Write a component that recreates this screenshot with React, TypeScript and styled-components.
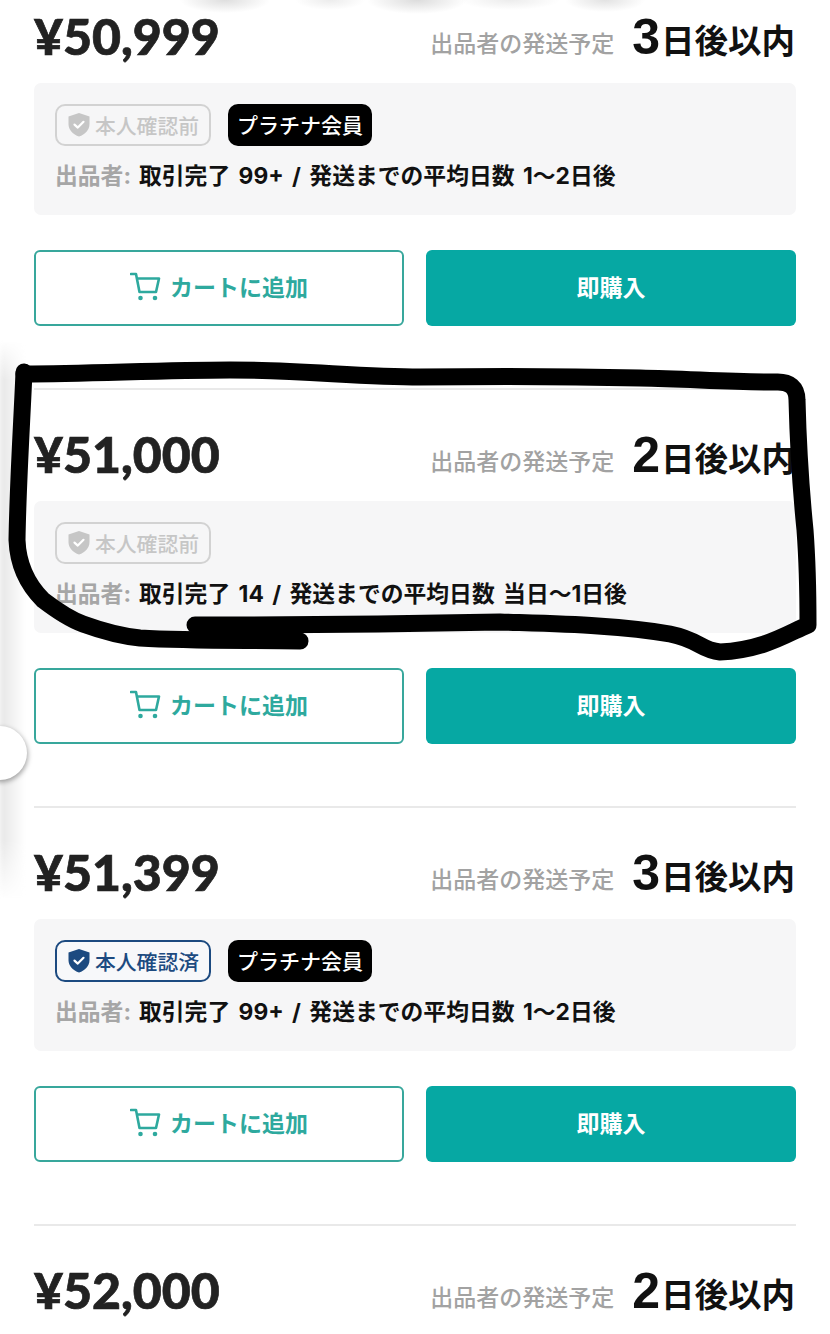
import React from "react";
import styled, { createGlobalStyle } from "styled-components";

const Global = createGlobalStyle`
  html, body { margin: 0; padding: 0; background: #fff; }
  * { box-sizing: border-box; }
`;

const Page = styled.div`
  position: relative;
  width: 830px;
  height: 1334px;
  overflow: hidden;
  background: #fff;
  padding: 14px 34px 0;
  font-family: "Noto Sans CJK JP", sans-serif;
`;

const Listing = styled.section<{ $first?: boolean }>`
  padding-top: ${(p) => (p.$first ? "0" : "42px")};
  padding-bottom: 62px;
  border-top: ${(p) => (p.$first ? "none" : "2px solid #e9e9e9")};
`;

const PriceRow = styled.div`
  display: flex;
  justify-content: space-between;
  align-items: center;
  height: 46px;
  margin-bottom: 23px;
`;

const Price = styled.div`
  font-family: Lato, "Noto Sans", sans-serif;
  font-weight: 900;
  font-size: 50px;
  line-height: 46px;
  color: #222;
  padding-bottom: 3px;
  -webkit-text-stroke: 0.7px #222;
`;

const Shipping = styled.div`
  display: flex;
  align-items: center;
  margin-right: 1px;
`;

const ShippingLabel = styled.span`
  font-size: 23px;
  font-weight: 500;
  line-height: 46px;
  color: #a2a2a2;
  margin-right: 18px;
  padding-top: 10px;
`;

const Days = styled.span`
  font-family: "Liberation Sans", sans-serif;
  font-weight: 700;
  font-size: 50px;
  line-height: 46px;
  margin-right: 1px;
  color: #111;
`;

const DaysUnit = styled.span`
  font-size: 33.5px;
  font-weight: 700;
  line-height: 46px;
  color: #111;
  padding-top: 4px;
`;

const SellerPanel = styled.div`
  height: 132px;
  background: #f6f6f7;
  border-radius: 7px;
  padding: 21px 21px 0;
  margin-bottom: 35px;
`;

const BadgeRow = styled.div`
  display: flex;
  gap: 17px;
  height: 42px;
  margin-bottom: 7px;
`;

const VerifyBadge = styled.div<{ $verified?: boolean }>`
  display: flex;
  align-items: center;
  gap: 4px;
  width: 156px;
  height: 42px;
  padding: 0 0 1px 10px;
  border: 2px solid ${(p) => (p.$verified ? "#1c4a80" : "#d2d2d2")};
  border-radius: 10px;
  background: ${(p) => (p.$verified ? "#f7f8fa" : "transparent")};
  color: ${(p) => (p.$verified ? "#1c4a80" : "#c6c6c6")};
  font-size: 20.8px;
  font-weight: 500;
  white-space: nowrap;
`;

const MemberBadge = styled.div`
  display: flex;
  align-items: center;
  justify-content: center;
  width: 144px;
  height: 42px;
  padding-bottom: 2px;
  border-radius: 10px;
  background: #000;
  color: #fff;
  font-size: 21px;
  font-weight: 500;
`;

const SellerLine = styled.div`
  font-family: Inter, "Noto Sans CJK JP", sans-serif;
  font-size: 22.8px;
  font-weight: 700;
  line-height: 46px;
  word-spacing: 3px;
  color: #111;
  white-space: nowrap;
`;

const SellerLabel = styled.span`
  color: #a6a6a6;
  margin-right: 8px;
`;

const Actions = styled.div`
  display: grid;
  grid-template-columns: 370px 370px;
  gap: 22px;
`;

const CartButton = styled.button`
  display: flex;
  align-items: center;
  justify-content: center;
  gap: 9px;
  height: 76px;
  background: #fff;
  border: 2px solid #38a79c;
  border-radius: 6px;
  color: #2ea99e;
  font-family: inherit;
  font-size: 23px;
  font-weight: 700;
  padding: 0 0 4px;
`;

const BuyButton = styled.button`
  height: 76px;
  background: #06a8a3;
  border: none;
  border-radius: 6px;
  color: #fff;
  font-family: inherit;
  font-size: 23px;
  font-weight: 700;
  padding: 0 0 4px;
`;

const EdgeShadow = styled.div`
  position: absolute;
  left: 0;
  top: 340px;
  width: 26px;
  height: 560px;
  background: linear-gradient(90deg, #e6e6e6, #f1f1f1 45%, #fbfbfb 80%, #ffffff);
  filter: blur(2px);
  -webkit-mask-image: linear-gradient(180deg, transparent, #000 40px, #000 500px, transparent);
  mask-image: linear-gradient(180deg, transparent, #000 40px, #000 500px, transparent);
`;

const Knob = styled.div`
  position: absolute;
  left: -27px;
  top: 726px;
  width: 54px;
  height: 54px;
  border-radius: 50%;
  background: #fff;
  box-shadow: 1px 2px 5px rgba(0, 0, 0, 0.35);
`;

const TopBlur = styled.div`
  position: absolute;
  top: 0;
  left: 0;
  width: 830px;
  height: 18px;
  background:
    radial-gradient(ellipse 45px 13px at 225px 0, #dedede, transparent),
    radial-gradient(ellipse 35px 10px at 330px 0, #ececec, transparent),
    radial-gradient(ellipse 50px 14px at 417px 0, #dcdcdc, transparent),
    radial-gradient(ellipse 50px 10px at 510px 0, #ececec, transparent),
    radial-gradient(ellipse 40px 12px at 605px 0, #e2e2e2, transparent);
`;

const Scribble = styled.svg`
  position: absolute;
  inset: 0;
  width: 830px;
  height: 1334px;
  pointer-events: none;
`;

function Shield() {
  return (
    <svg width="24" height="25" viewBox="0 0 24 25" aria-hidden="true">
      <path
        fill="currentColor"
        d="M12 1 L22.5 4.5 V12 C22.5 18 18 22.5 12 24.5 C6 22.5 1.5 18 1.5 12 V4.5 Z"
      />
      <path
        d="M7.5 12.6 L10.8 15.6 L16.5 9.8"
        fill="none"
        stroke="#fff"
        strokeWidth="2.2"
        strokeLinecap="round"
        strokeLinejoin="round"
      />
    </svg>
  );
}

function Cart() {
  return (
    <svg width="31" height="29" viewBox="0 0 31 29" fill="none" aria-hidden="true">
      <path
        d="M1 2 H6 L9.5 20 H26 L29 6.5 H7"
        stroke="currentColor"
        strokeWidth="2.6"
        strokeLinejoin="round"
        strokeLinecap="round"
      />
      <circle cx="10.5" cy="26" r="2.3" fill="currentColor" />
      <circle cx="25" cy="26" r="2.3" fill="currentColor" />
    </svg>
  );
}

type Item = {
  price: string;
  days: string;
  verified: boolean;
  platinum: boolean;
  deals: string;
  average: string;
};

const items: Item[] = [
  { price: "¥50,999", days: "3", verified: false, platinum: true, deals: "99+", average: "1〜2日後" },
  { price: "¥51,000", days: "2", verified: false, platinum: false, deals: "14", average: "当日〜1日後" },
  { price: "¥51,399", days: "3", verified: true, platinum: true, deals: "99+", average: "1〜2日後" },
  { price: "¥52,000", days: "2", verified: false, platinum: false, deals: "", average: "" },
];

export default function App() {
  return (
    <>
      <Global />
      <Page>
        {items.map((item, i) => (
          <Listing key={item.price} $first={i === 0}>
            <PriceRow>
              <Price>{item.price}</Price>
              <Shipping>
                <ShippingLabel>出品者の発送予定</ShippingLabel>
                <Days>{item.days}</Days>
                <DaysUnit>日後以内</DaysUnit>
              </Shipping>
            </PriceRow>
            {i < 3 && (
              <>
                <SellerPanel>
                  <BadgeRow>
                    <VerifyBadge $verified={item.verified}>
                      <Shield />
                      {item.verified ? "本人確認済" : "本人確認前"}
                    </VerifyBadge>
                    {item.platinum && <MemberBadge>プラチナ会員</MemberBadge>}
                  </BadgeRow>
                  <SellerLine>
                    <SellerLabel>出品者:</SellerLabel>
                    取引完了 {item.deals} / 発送までの平均日数 {item.average}
                  </SellerLine>
                </SellerPanel>
                <Actions>
                  <CartButton>
                    <Cart />
                    カートに追加
                  </CartButton>
                  <BuyButton>即購入</BuyButton>
                </Actions>
              </>
            )}
          </Listing>
        ))}
        <TopBlur />
        <EdgeShadow />
        <Knob />
        <Scribble viewBox="0 0 830 1334" fill="none">
          <path
            d="M24 372 C22 420 18 480 17 540 C18 566 28 585 43 600 C60 613 72 620 83 624 C105 632 120 636 140 638 C190 641 250 640 300 641"
            stroke="#000"
            strokeWidth="17"
            strokeLinecap="round"
            strokeLinejoin="round"
          />
          <path
            d="M24 374 C90 374 160 370 230 370 C300 370 360 377 420 377 C500 376 560 376 640 378 C690 379 730 382 775 382 C790 381 797 388 797 400 C798 440 800 480 805 530 C808 570 808 600 808 625 C790 632 765 650 720 652 C700 650 700 640 670 634 C620 625 560 624 500 622 C400 624 300 625 195 625"
            stroke="#000"
            strokeWidth="17"
            strokeLinecap="round"
            strokeLinejoin="round"
          />
        </Scribble>
      </Page>
    </>
  );
}
